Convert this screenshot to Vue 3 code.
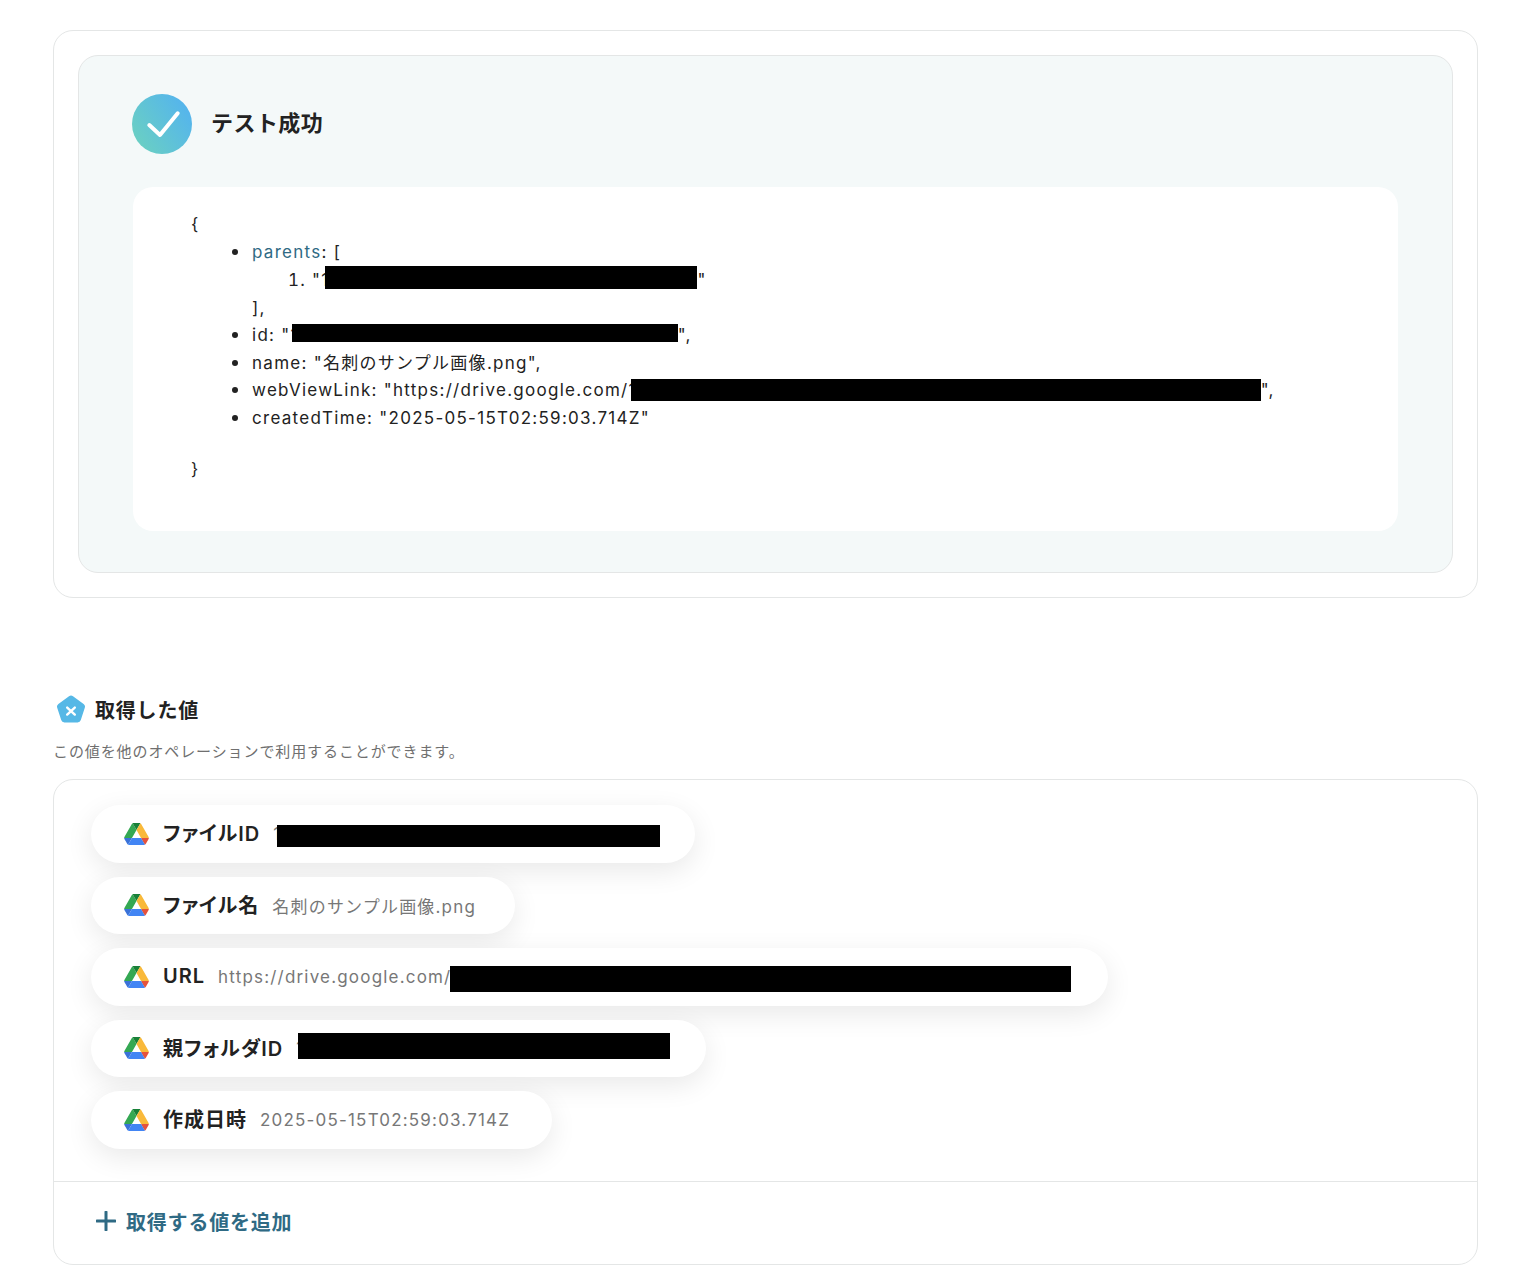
<script setup>
const pills = [
  { label: 'ファイルID', value: '1', mask: 383, maskH: 22, shift: -4, top: 4, w: 604 },
  { label: 'ファイル名', value: '名刺のサンプル画像.png', w: 424 },
  { label: 'URL', value: 'https://drive.google.com/', mask: 621, maskH: 26, shift: -1, top: 4, w: 1017 },
  { label: '親フォルダID', value: '1', mask: 372, maskH: 26, shift: -6, top: -4, w: 615 },
  { label: '作成日時', value: '2025-05-15T02:59:03.714Z', w: 461 }
]
</script>

<template>
  <div class="page">
    <section class="card">
      <div class="success">
        <header class="success-head">
          <svg class="check" width="60" height="60" viewBox="0 0 60 60" aria-hidden="true">
            <defs>
              <linearGradient id="ok" x1="0" y1="1" x2="1" y2="0.35">
                <stop offset="0" stop-color="#6dd3bd" />
                <stop offset="1" stop-color="#55b5ec" />
              </linearGradient>
            </defs>
            <circle cx="30" cy="30" r="30" fill="url(#ok)" />
            <path d="M17.3 31L28 41L45.7 19.3" fill="none" stroke="#fff" stroke-width="4" stroke-linecap="round" stroke-linejoin="round" />
          </svg>
          <h2>テスト成功</h2>
        </header>
        <div class="code">
          <div>{</div>
          <ul>
            <li>
              <span class="key">parents</span>: [
              <ol>
                <li>"1<span class="mask m1"></span>"</li>
              </ol>
              <div class="close">],</div>
            </li>
            <li>id: "1<span class="mask m2"></span>",</li>
            <li>name: "名刺のサンプル画像.png",</li>
            <li>webViewLink: "https://drive.google.com/1<span class="mask m3"></span>",</li>
            <li>createdTime: "2025-05-15T02:59:03.714Z"</li>
          </ul>
          <div>}</div>
        </div>
      </div>
    </section>

    <section class="values">
      <h3>
        <svg width="30" height="29" viewBox="0 0 30 29" aria-hidden="true">
          <path d="M13 1.2a3.4 3.4 0 0 1 4 0l10.6 7.7a3.4 3.4 0 0 1 1.2 3.8l-4 12.4a3.4 3.4 0 0 1-3.2 2.4H8.4a3.4 3.4 0 0 1-3.2-2.4l-4-12.4a3.4 3.4 0 0 1 1.2-3.8z" fill="#56b8e6" />
          <path d="M11.2 12.6l7.6 7M18.8 12.6l-7.6 7" stroke="#fff" stroke-width="2.4" stroke-linecap="round" />
        </svg>
        取得した値
      </h3>
      <p class="hint">この値を他のオペレーションで利用することができます。</p>
      <div class="panel">
        <div class="pills">
          <div v-for="p in pills" :key="p.label" class="pill" :style="{ width: p.w + 'px' }">
            <svg class="drive" width="25" height="22" viewBox="0 0 87.3 78" aria-hidden="true">
              <path d="m6.6 66.85 3.85 6.65c.8 1.4 1.95 2.5 3.3 3.3l13.75-23.8h-27.5c0 1.55.4 3.1 1.2 4.5z" fill="#3a72d8" />
              <path d="m43.65 25-13.75-23.8c-1.35.8-2.5 1.9-3.3 3.3l-25.4 44a9.06 9.06 0 0 0 -1.2 4.5h27.5z" fill="#34a853" />
              <path d="m73.55 76.8c1.35-.8 2.5-1.9 3.3-3.3l1.6-2.75 7.65-13.25c.8-1.4 1.2-2.95 1.2-4.5h-27.502l5.852 11.5z" fill="#e5533d" />
              <path d="m43.65 25 13.75-23.8c-1.35-.8-2.9-1.2-4.5-1.2h-18.5c-1.6 0-3.15.45-4.5 1.2z" fill="#188038" />
              <path d="m59.8 53h-32.3l-13.75 23.8c1.35.8 2.9 1.2 4.5 1.2h50.8c1.6 0 3.15-.45 4.5-1.2z" fill="#4285f4" />
              <path d="m73.4 26.5-12.7-22c-.8-1.4-1.95-2.5-3.3-3.3l-13.75 23.8 16.15 28h27.45c0-1.55-.4-3.1-1.2-4.5z" fill="#f9b93a" />
            </svg>
            <span class="label">{{ p.label }}</span>
            <span class="value">{{ p.value }}</span>
            <span
              v-if="p.mask"
              class="pill-mask"
              :style="{ width: p.mask + 'px', height: p.maskH + 'px', marginLeft: p.shift + 'px', marginTop: p.top + 'px' }"
            ></span>
          </div>
        </div>
        <button class="add" type="button">
          <svg width="20" height="20" viewBox="0 0 20 20" aria-hidden="true">
            <path d="M10 1v18M1 10h18" stroke="#2f6a84" stroke-width="3" stroke-linecap="round" />
          </svg>
          取得する値を追加
        </button>
      </div>
    </section>
  </div>
</template>

<style scoped>
.page {
  width: 1425px;
  margin-left: 53px;
  padding-top: 30px;
  font-family: Inter, "Noto Sans CJK JP", sans-serif;
  color: #222;
  letter-spacing: 0.04em;
}
.card {
  box-sizing: border-box;
  height: 568px;
  padding: 24px;
  border: 1px solid #e4e6e6;
  border-radius: 20px;
  background: #fff;
}
.success {
  box-sizing: border-box;
  height: 518px;
  padding: 38px 54px 41px;
  border: 1px solid #e4e6e6;
  border-radius: 20px;
  background: #f4f9f9;
}
.success-head {
  display: flex;
  align-items: center;
  gap: 19px;
  height: 60px;
  margin-bottom: 33px;
}
.check { display: block; margin-left: -1px; }
h2 {
  margin: 0 0 6px;
  font-size: 22px;
  font-weight: 600;
  letter-spacing: 0.02em;
}
.code {
  box-sizing: border-box;
  height: 344px;
  padding: 24px 58px;
  border-radius: 20px;
  background: #fff;
  font-size: 17px;
  line-height: 27.5px;
  letter-spacing: 0.075em;
}
ul {
  margin: 0.6px 0 24px;
  padding-left: 61px;
  list-style: none;
}
ul > li::before {
  content: "";
  display: inline-block;
  width: 6px;
  height: 6px;
  margin-left: -20px;
  margin-right: 14px;
  border-radius: 50%;
  background: #222;
  vertical-align: 3px;
}
ol {
  margin: -1px 0 0;
  padding-left: 60px;
}
.close { margin-top: 0.6px; }
.key { color: #2f6a84; }
.mask {
  display: inline-block;
  background: #000;
}
.m1 { width: 372px; height: 23px; margin-left: -4px; vertical-align: -3px; }
.m2 { width: 386px; height: 18px; margin-left: -7px; vertical-align: -1px; }
.m3 { width: 630px; height: 22px; margin-left: -6px; vertical-align: -5px; }
.values { margin-top: 96px; }
h3 {
  display: flex;
  align-items: center;
  gap: 9px;
  margin: 0 0 0 3px;
  height: 30px;
  font-size: 20px;
  font-weight: 600;
  letter-spacing: 0.04em;
}
.hint {
  margin: 16px 0 15px;
  height: 24px;
  font-size: 15px;
  line-height: 24px;
  letter-spacing: 0.06em;
  color: #6f6f6f;
}
.panel {
  box-sizing: border-box;
  height: 486px;
  border: 1px solid #e4e6e6;
  border-radius: 20px;
  background: #fff;
}
.pills {
  box-sizing: border-box;
  height: 402px;
  padding: 25px 37px;
  display: flex;
  flex-direction: column;
  gap: 14px;
  border-bottom: 1px solid #e4e6e6;
}
.pill {
  box-sizing: border-box;
  display: flex;
  align-items: center;
  height: 57.5px;
  padding-left: 33px;
  border-radius: 29px;
  background: #fff;
  box-shadow: 0 8px 28px rgba(0, 0, 0, 0.09);
  white-space: nowrap;
}
.drive { flex: none; margin-right: 14px; }
.label {
  margin-bottom: 2px;
  font-size: 20px;
  font-weight: 600;
  color: #222;
  letter-spacing: 0.05em;
  font-feature-settings: "palt";
}
.value {
  margin-left: 13px;
  font-size: 17px;
  letter-spacing: 0.07em;
  color: #777;
}
.pill-mask {
  flex: none;
  background: #000;
}
.add {
  display: flex;
  align-items: center;
  gap: 10px;
  height: 78px;
  padding: 0 0 0 42px;
  border: 0;
  background: none;
  font: inherit;
  font-size: 20px;
  font-weight: 600;
  letter-spacing: 0.04em;
  color: #2f6a84;
}
</style>

<style>
html, body { background: #fff; }
</style>
